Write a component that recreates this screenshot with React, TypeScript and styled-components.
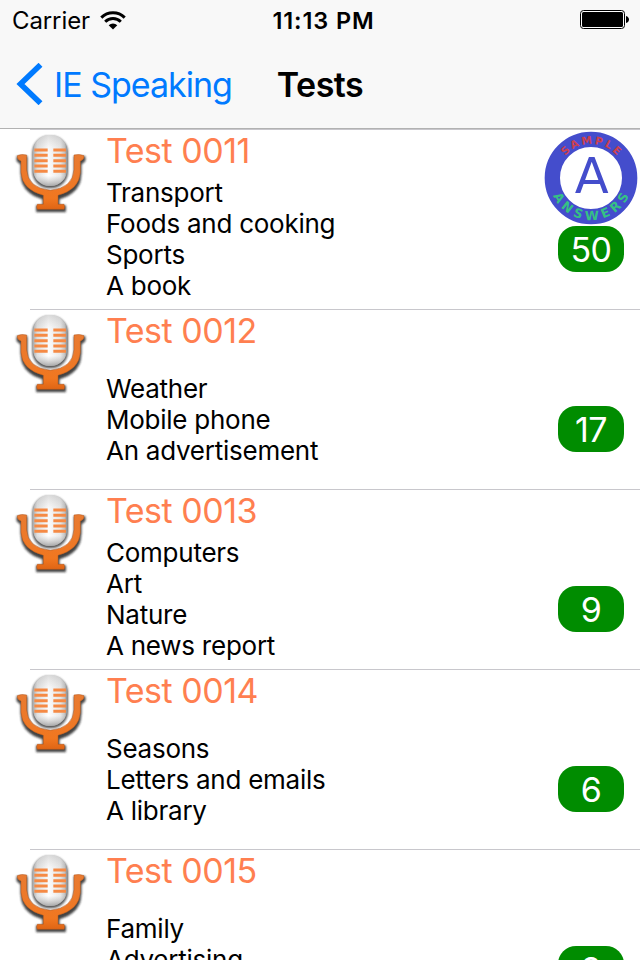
import React from 'react';
import styled, { createGlobalStyle } from 'styled-components';

const GlobalStyle = createGlobalStyle`
    * {
        box-sizing: border-box;
    }

    body {
        margin: 0;
        overflow: hidden;
        background: #fff;
        color: #000;
        font-family: Inter, 'Liberation Sans', sans-serif;
    }
`;

const Screen = styled.div`
    width: 640px;
    height: 960px;
    overflow: hidden;
    background: #fff;
`;

const Header = styled.header`
    height: 129px;
    background: #f8f8f8;
    border-bottom: 1px solid #b2b2b2;
`;

const StatusBar = styled.div`
    display: grid;
    grid-template-columns: 1fr auto 1fr;
    align-items: center;
    height: 40px;
    padding: 0 11px 0 12px;
`;

const Carrier = styled.div`
    display: flex;
    align-items: center;
    gap: 10px;
    font-size: 24px;
    letter-spacing: -0.1px;
`;

const Clock = styled.div`
    padding: 1px 0 0 6px;
    font-size: 23.5px;
    font-weight: 600;
    letter-spacing: 0.9px;
`;

const Battery = styled.svg`
    justify-self: end;
`;

const NavBar = styled.nav`
    display: grid;
    grid-template-columns: 1fr auto 1fr;
    align-items: center;
    height: 88px;
    padding: 0 16px;
`;

const BackButton = styled.a`
    display: flex;
    align-items: center;
    gap: 11px;
    color: #007aff;
    font-size: 34px;
    letter-spacing: -1px;
    white-space: nowrap;
`;

const Title = styled.h1`
    margin: 0;
    font-size: 34px;
    font-weight: 600;
    letter-spacing: -0.5px;
`;

const List = styled.ul`
    margin: 0;
    padding: 0;
    list-style: none;

    &::before {
        content: '';
        display: block;
        height: 1px;
        margin-left: 30px;
        background: #c8c7cc;
    }
`;

const Row = styled.li`
    display: grid;
    grid-template-columns: 94px 1fr 96px;
    height: 180px;
    padding-left: 12px;
    background: linear-gradient(#c8c7cc, #c8c7cc) 30px 179px / 100% 1px no-repeat;
`;

const TestName = styled.h2`
    height: 44px;
    margin: 0;
    color: #ff7f50;
    font-size: 34px;
    font-weight: 400;
    line-height: 42px;
    letter-spacing: -0.5px;
`;

const Topics = styled.div`
    display: flex;
    flex-direction: column;
    justify-content: center;
    height: 130px;
`;

const Topic = styled.div`
    font-size: 26px;
    line-height: 31px;
    letter-spacing: -0.25px;
`;

const Aside = styled.div`
    display: flex;
    flex-direction: column;
`;

const SealSlot = styled.div`
    height: 96px;
    padding-top: 1px;
`;

const Count = styled.div`
    width: 66px;
    height: 46px;
    margin-left: 14px;
    border-radius: 18px;
    background: #008c00;
    color: #fff;
    font-size: 34px;
    line-height: 47px;
    letter-spacing: -0.5px;
    text-align: center;
`;

function WifiIcon() {
    return (
        <svg width="26" height="19" viewBox="0 0 26 19" fill="none" stroke="#000">
            <path d="M1.3 6.6a16.6 16.6 0 0 1 23.4 0" strokeWidth="3" />
            <path d="M5.2 10.7a11 11 0 0 1 15.6 0" strokeWidth="2.9" />
            <path d="M8.7 14.2a6.1 6.1 0 0 1 8.6 0L13 18.5z" fill="#000" stroke="none" />
        </svg>
    );
}

function BatteryIcon() {
    return (
        <Battery width="49" height="20" viewBox="0 0 49 20">
            <rect x="0.5" y="0.5" width="44" height="18" rx="3" fill="#fff" stroke="#000" />
            <rect x="2" y="2" width="41" height="15" rx="1.5" />
            <path d="M46 6c4 1 4 6 0 7z" />
        </Battery>
    );
}

function Microphone() {
    return (
        <svg width="76" height="84" viewBox="21 14 228 252">
            <defs>
                <linearGradient id="capsule" x1="0" x2="1">
                    <stop offset="0" stopColor="#aaa" />
                    <stop offset="0.12" stopColor="#e0e0e0" />
                    <stop offset="0.45" stopColor="#fff" />
                    <stop offset="0.8" stopColor="#e9e9e9" />
                    <stop offset="0.92" stopColor="#c4c4c4" />
                    <stop offset="1" stopColor="#888" />
                </linearGradient>
                <linearGradient id="capsuleShade" x1="0" x2="0" y1="0" y2="1">
                    <stop offset="0" stopColor="#999" stopOpacity="0.35" />
                    <stop offset="0.25" stopColor="#aaa" stopOpacity="0.08" />
                    <stop offset="0.8" stopColor="#888" stopOpacity="0" />
                    <stop offset="1" stopColor="#555" stopOpacity="0.5" />
                </linearGradient>
                <linearGradient id="stand" x1="0" x2="0" y1="0" y2="1">
                    <stop offset="0" stopColor="#e87b32" />
                    <stop offset="0.8" stopColor="#f17720" />
                    <stop offset="1" stopColor="#df6515" />
                </linearGradient>
                <filter id="soft" x="-20%" y="-20%" width="140%" height="140%">
                    <feGaussianBlur stdDeviation="3" />
                </filter>
            </defs>
            <path
                d="M36 94h30v43q0 57 71 62q71-5 71-62V94h32v13l-12 10v29q0 57-66 75v20h19v18H95v-18h19v-20q-66-18-66-75v-29l-12-10z"
                fill="#222"
                stroke="#222"
                strokeWidth="3"
                opacity="0.85"
                filter="url(#soft)"
            />
            <path
                d="M37 91q13-6 28-2v44q3 55 71 62q68-7 71-62V89q15-4 30 2q2 11-11 16v34q-3 52-67 69v27h18q4 8 0 15H97q-4-8 0-15h18v-27q-64-17-67-69v-34q-13-5-11-16z"
                fill="url(#stand)"
                stroke="#b9581c"
                strokeWidth="1.5"
            />
            <rect x="82" y="32" width="107" height="157" rx="50" fill="#333" opacity="0.8" filter="url(#soft)" />
            <rect x="84" y="29" width="103" height="153" rx="50" fill="url(#capsule)" />
            <rect x="84" y="29" width="103" height="153" rx="50" fill="url(#capsuleShade)" />
            <path
                d="M88 74h40M88 90h40M88 106h40M88 122h40M88 138h40M145 74h38M145 90h38M145 106h38M145 122h38M145 138h38"
                stroke="#f58a45"
                strokeWidth="9"
            />
        </svg>
    );
}

function SampleSeal() {
    return (
        <svg width="94" height="94" viewBox="12 18 282 282" fontFamily="'DejaVu Sans', sans-serif">
            <circle cx="153" cy="159" r="116" fill="#fff" stroke="#444dcc" strokeWidth="46" />
            <path id="sealTop" d="M51 159a102 102 0 0 1 204 0" fill="none" />
            <path id="sealBottom" d="M27 159a126 126 0 0 0 252 0" fill="none" />
            <text x="155" y="204" fill="#444dcc" fontSize="149" textAnchor="middle">A</text>
            <text fill="#cc404e" fontSize="32" fontWeight="700" textAnchor="middle">
                <textPath href="#sealTop" startOffset="50%" textLength="176">SAMPLE</textPath>
            </text>
            <text fill="#35c184" fontSize="38" fontWeight="700" textAnchor="middle">
                <textPath href="#sealBottom" startOffset="50%" textLength="286">ANSWERS</textPath>
            </text>
        </svg>
    );
}

const tests = [
    { name: 'Test 0011', count: 50, sample: true, topics: ['Transport', 'Foods and cooking', 'Sports', 'A book'] },
    { name: 'Test 0012', count: 17, topics: ['Weather', 'Mobile phone', 'An advertisement'] },
    { name: 'Test 0013', count: 9, topics: ['Computers', 'Art', 'Nature', 'A news report'] },
    { name: 'Test 0014', count: 6, topics: ['Seasons', 'Letters and emails', 'A library'] },
    { name: 'Test 0015', count: 9, topics: ['Family', 'Advertising', 'A film'] },
];

export default function App() {
    return (
        <Screen>
            <GlobalStyle />
            <Header>
                <StatusBar>
                    <Carrier>
                        Carrier
                        <WifiIcon />
                    </Carrier>
                    <Clock>11:13 PM</Clock>
                    <BatteryIcon />
                </StatusBar>
                <NavBar>
                    <BackButton>
                        <svg width="27" height="42" viewBox="0 0 27 42" fill="none">
                            <path d="M24.5 1.8L4.5 21l20 19.2" stroke="#007aff" strokeWidth="5.6" />
                        </svg>
                        IE Speaking
                    </BackButton>
                    <Title>Tests</Title>
                </NavBar>
            </Header>
            <List>
                {tests.map((test) => (
                    <Row key={test.name}>
                        <Microphone />
                        <div>
                            <TestName>{test.name}</TestName>
                            <Topics>
                                {test.topics.map((topic) => (
                                    <Topic key={topic}>{topic}</Topic>
                                ))}
                            </Topics>
                        </div>
                        <Aside>
                            <SealSlot>{test.sample && <SampleSeal />}</SealSlot>
                            <Count>{test.count}</Count>
                        </Aside>
                    </Row>
                ))}
            </List>
        </Screen>
    );
}
